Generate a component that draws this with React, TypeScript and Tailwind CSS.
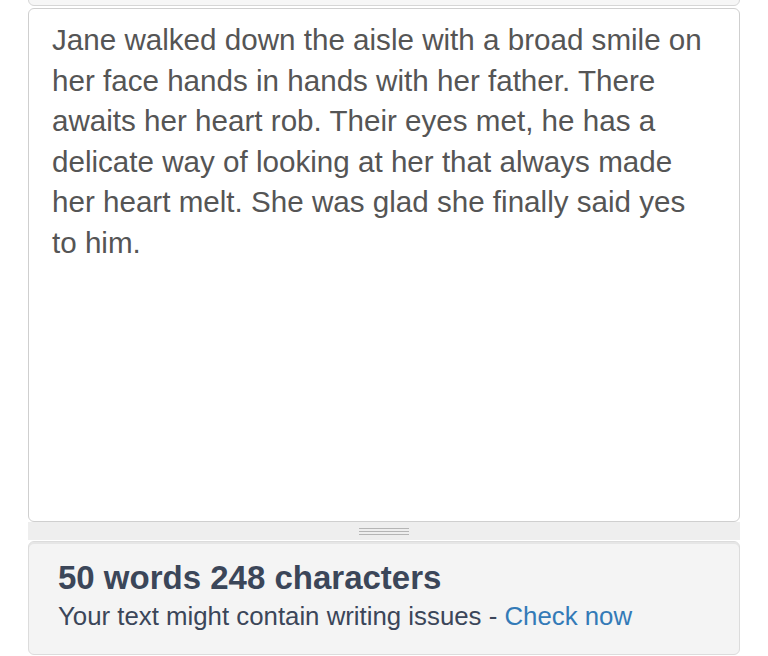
export default function App() {
  const text =
    "Jane walked down the aisle with a broad smile on her face hands in hands with her father. There awaits her heart rob. Their eyes met, he has a delicate way of looking at her that always made her heart melt. She was glad she finally said yes to him.";

  return (
    <div className="h-[656px] w-[768px] overflow-hidden bg-white px-[28px] font-['Liberation_Sans',Arial,sans-serif]">
      {/* bottom of previous panel */}
      <div className="-mt-[10px] h-[16px] rounded-b-[6px] border border-[#d6d6d6] bg-[#f6f6f6]" />

      {/* text area */}
      <div className="mt-[2px] h-[514px] rounded-[6px] border border-[#cfcfcf] bg-white pl-[23px] pr-[32px] pt-[11px]">
        <p className="text-[29.6px] leading-[40.5px] text-[#555555]">{text}</p>
      </div>

      {/* resize grip */}
      <div className="flex h-[18px] flex-col items-center justify-center gap-[2px] bg-[#eeeeee]">
        <div className="h-px w-[50px] bg-[#b5b5b5]" />
        <div className="h-px w-[50px] bg-[#b5b5b5]" />
        <div className="h-px w-[50px] bg-[#b5b5b5]" />
      </div>

      {/* stats */}
      <div className="mt-[1px] h-[114px] rounded-[6px] border border-[#dcdcdc] bg-[#f4f4f4] px-[29px] pt-[16px] shadow-[inset_0_2px_0_#e6e6e6]">
        <div className="text-[33px] font-bold leading-[40px] text-[#3b4659]">
          50 words 248 characters
        </div>
        <div className="text-[25.8px] leading-[36px] text-[#3b4659]">
          Your text might contain writing issues -{" "}
          <a className="text-[#337ab7]">Check now</a>
        </div>
      </div>
    </div>
  );
}
